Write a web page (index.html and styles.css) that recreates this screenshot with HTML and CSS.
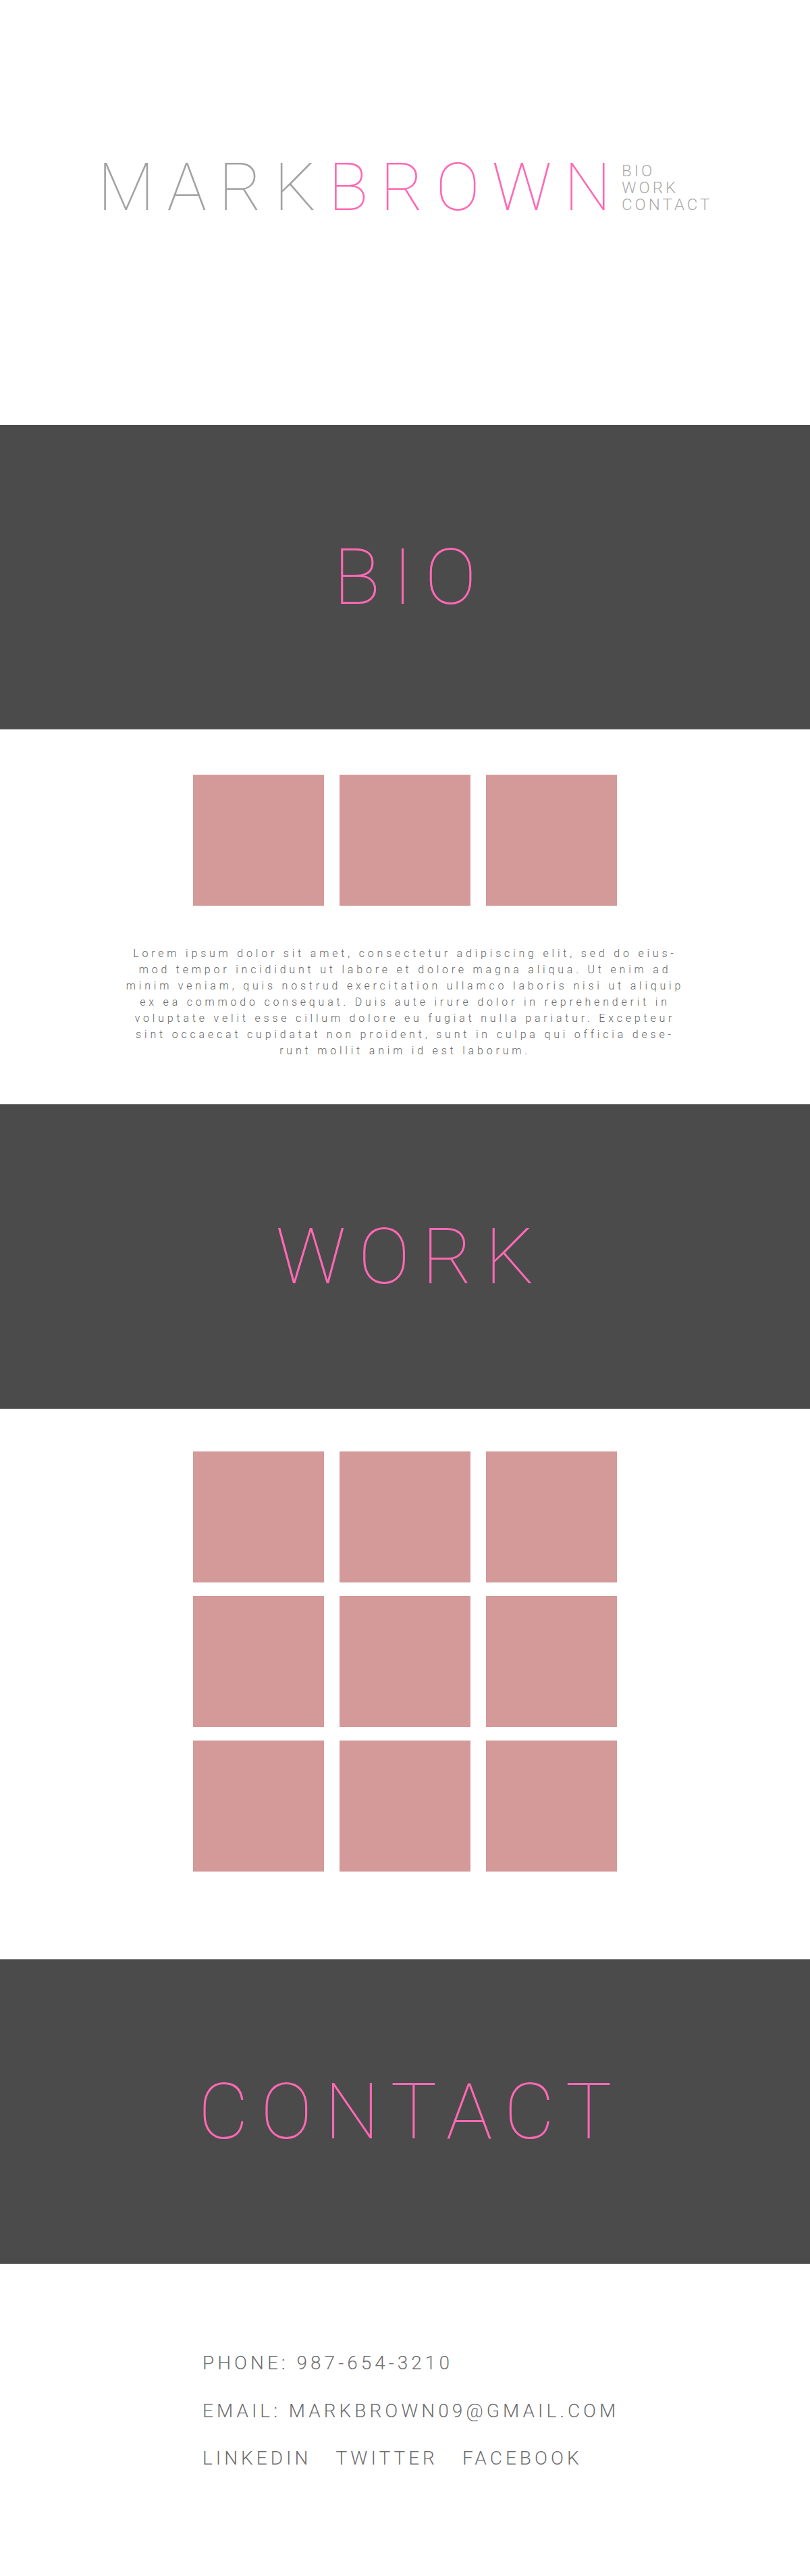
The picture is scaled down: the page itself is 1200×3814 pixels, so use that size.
FILE: index.html
```html
<!DOCTYPE html>
<html lang="en">
<head>
<meta charset="utf-8">
<title>Mark Brown</title>
<link rel="stylesheet" href="styles.css">
</head>
<body>
<header class="masthead">
  <div class="brand">
    <h1 class="logo"><span class="logo-first">MARK</span><span class="logo-last">BROWN</span></h1>
    <nav class="menu">
      <a href="#bio">BIO</a>
      <a href="#work">WORK</a>
      <a href="#contact">CONTACT</a>
    </nav>
  </div>
</header>

<section class="band" id="bio"><h2 class="band-title">BIO</h2></section>
<section class="bio">
  <div class="tiles">
    <div class="tile"></div><div class="tile"></div><div class="tile"></div>
  </div>
  <p class="bio-text">Lorem ipsum dolor sit amet, consectetur adipiscing elit, sed do eius-mod tempor incididunt ut labore et dolore magna aliqua. Ut enim ad minim veniam, quis nostrud exercitation ullamco laboris nisi ut aliquip ex ea commodo consequat. Duis aute irure dolor in reprehenderit in voluptate velit esse cillum dolore eu fugiat nulla pariatur. Excepteur sint occaecat cupidatat non proident, sunt in culpa qui officia dese-runt mollit anim id est laborum.</p>
</section>

<section class="band" id="work"><h2 class="band-title">WORK</h2></section>
<section class="work">
  <div class="tiles">
    <div class="tile"></div><div class="tile"></div><div class="tile"></div>
    <div class="tile"></div><div class="tile"></div><div class="tile"></div>
    <div class="tile"></div><div class="tile"></div><div class="tile"></div>
  </div>
</section>

<section class="band" id="contact"><h2 class="band-title">CONTACT</h2></section>
<section class="contact">
  <p class="contact-line">PHONE: 987-654-3210</p>
  <p class="contact-line">EMAIL: MARKBROWN09@GMAIL.COM</p>
  <p class="contact-line social"><a href="#">LINKEDIN</a><a href="#">TWITTER</a><a href="#">FACEBOOK</a></p>
</section>
</body>
</html>
```

FILE: styles.css
```css
* { box-sizing: border-box; }

html, body {
  margin: 0;
  padding: 0;
  background: #ffffff;
  font-family: Roboto, "Liberation Sans", sans-serif;
}

a { color: inherit; text-decoration: none; }

/* ---------- header ---------- */
.masthead {
  height: 629px;
  padding-top: 229px;
}

.brand {
  display: flex;
  justify-content: center;
  align-items: flex-end;
  gap: 16px;
}

.logo {
  margin: 0 -18px 0 0;
  font-size: 98px;
  line-height: 98px;
  font-weight: 100;
  letter-spacing: 18px;
  white-space: nowrap;
}

.logo-first { color: #a3a3a3; }
.logo-last { color: #ff69b4; }

.menu {
  display: flex;
  flex-direction: column;
  margin-bottom: 11px;
  font-size: 24px;
  line-height: 25px;
  font-weight: 300;
  letter-spacing: 4px;
  color: #ababab;
}

/* ---------- dark bands ---------- */
.band {
  height: 451px;
  background: #4b4b4b;
  border-bottom: 1px solid #666666;
  display: flex;
  align-items: center;
  justify-content: center;
}

.band-title {
  margin: 0;
  font-size: 115px;
  line-height: 1;
  font-weight: 100;
  color: #ff69b4;
  letter-spacing: 18px;
  padding-left: 18px;
}

/* ---------- tiles ---------- */
.tiles {
  display: grid;
  grid-template-columns: repeat(3, 194px);
  grid-auto-rows: 194px;
  column-gap: 23px;
  row-gap: 20px;
  justify-content: center;
}

.tile { background: #d49a99; }

/* ---------- bio ---------- */
.bio {
  padding: 67px 0 67px;
}

.bio-text {
  width: 845px;
  margin: 59px auto 0;
  font-size: 16px;
  line-height: 24px;
  font-weight: 300;
  letter-spacing: 4.8px;
  color: #666666;
  text-align: center;
}

/* ---------- work ---------- */
.work {
  padding: 63px 0 130px;
}

/* ---------- contact ---------- */
.contact {
  height: 462px;
  padding: 131px 0 0 300px;
  display: flex;
  flex-direction: column;
  gap: 38px;
}

.contact-line {
  margin: 0;
  font-size: 28px;
  line-height: 32.5px;
  font-weight: 300;
  letter-spacing: 5px;
  color: #6f6f6f;
  white-space: nowrap;
}

.social {
  display: flex;
  gap: 36px;
}
```
